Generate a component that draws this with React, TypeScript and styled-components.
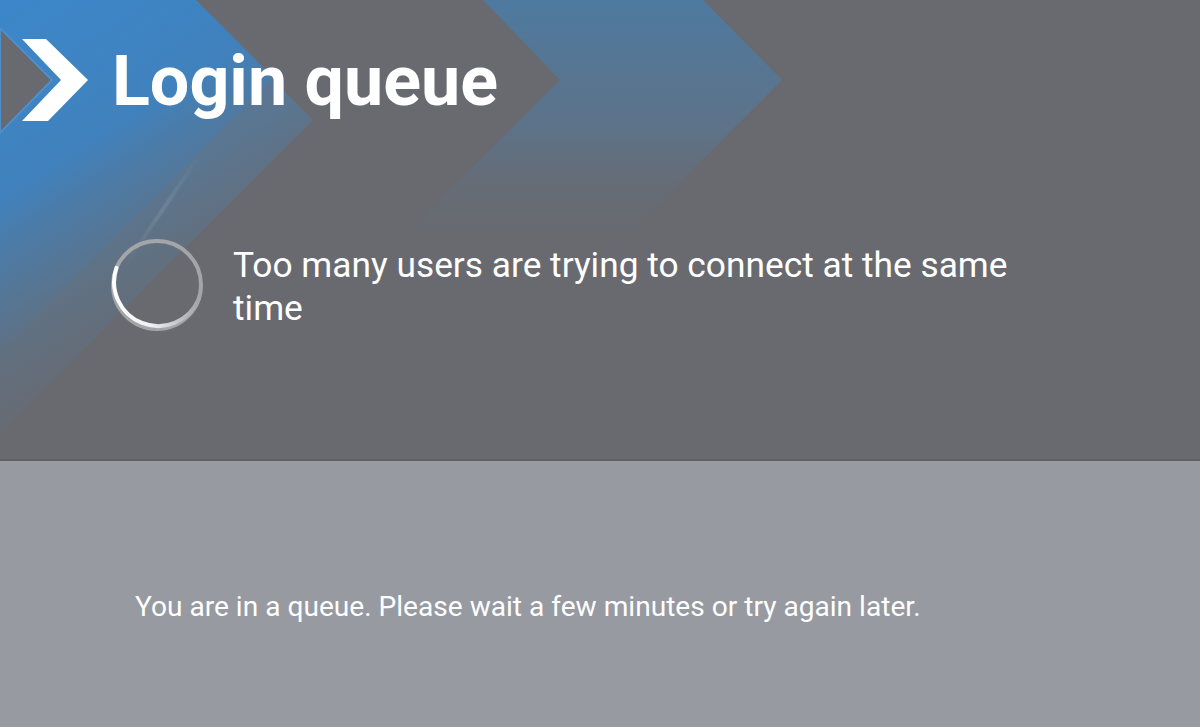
import styled, { createGlobalStyle } from "styled-components";

const GlobalStyle = createGlobalStyle`
  html, body {
    margin: 0;
    padding: 0;
    background: #686a70;
  }
  body {
    font-family: Roboto, "Noto Sans", "Liberation Sans", sans-serif;
    color: #ffffff;
  }
`;

const Screen = styled.div`
  display: flex;
  flex-direction: column;
  width: 1200px;
  height: 727px;
  overflow: hidden;
`;

const TopPanel = styled.section`
  position: relative;
  height: 459px;
  background: #686a70;
  border-bottom: 2px solid #5f6166;
  overflow: hidden;
`;

const Backdrop = styled.svg`
  position: absolute;
  inset: 0;
  width: 100%;
  height: 100%;
  pointer-events: none;
`;

const Content = styled.div`
  position: relative;
  display: flex;
  flex-direction: column;
`;

const TitleRow = styled.div`
  display: flex;
  align-items: center;
  gap: 22px;
  padding-top: 28px;
`;

const Title = styled.h1`
  margin: 0;
  font-size: 70px;
  line-height: 70px;
  font-weight: 700;
`;

const StatusRow = styled.div`
  display: flex;
  align-items: center;
  gap: 29px;
  margin-top: 104px;
  padding-left: 110px;
`;

const StatusText = styled.p`
  margin: 4px 0 0;
  max-width: 810px;
  font-size: 35.3px;
  line-height: 43px;
  font-weight: 400;
`;

const BottomPanel = styled.section`
  flex: 1;
  background: #979aa1;
  padding: 129px 0 0 135px;
`;

const Notice = styled.p`
  margin: 0;
  font-size: 28.1px;
  line-height: 34px;
  font-weight: 400;
`;

function Chevrons() {
  return (
    <Backdrop viewBox="0 0 1200 459" preserveAspectRatio="none">
      <defs>
        <linearGradient id="fadeA" x1="0" y1="0" x2="0.45" y2="1">
          <stop offset="0" stopColor="#4b7faf" stopOpacity="1" />
          <stop offset="0.55" stopColor="#587896" stopOpacity="0.85" />
          <stop offset="1" stopColor="#686a70" stopOpacity="0" />
        </linearGradient>
        <linearGradient id="fadeB" x1="0" y1="0" x2="0.5" y2="1">
          <stop offset="0" stopColor="#3c87ca" stopOpacity="1" />
          <stop offset="0.45" stopColor="#3f82bf" stopOpacity="0.95" />
          <stop offset="1" stopColor="#686a70" stopOpacity="0" />
        </linearGradient>
        <linearGradient id="fadeC" x1="0" y1="0" x2="0" y2="1">
          <stop offset="0" stopColor="#4e7aa0" stopOpacity="1" />
          <stop offset="0.5" stopColor="#5a7590" stopOpacity="0.8" />
          <stop offset="1" stopColor="#686a70" stopOpacity="0" />
        </linearGradient>
        <linearGradient id="streak" x1="0" y1="0" x2="1" y2="0">
          <stop offset="0" stopColor="#ffffff" stopOpacity="0" />
          <stop offset="0.5" stopColor="#ffffff" stopOpacity="0.1" />
          <stop offset="1" stopColor="#ffffff" stopOpacity="0" />
        </linearGradient>
      </defs>
      <polygon points="0,0 193,0 313,120 0,433" fill="url(#fadeA)" />
      <polygon points="0,0 196,0 274,78 0,352" fill="url(#fadeB)" />
      <polygon points="483,0 703,0 782,80 612,250 390,250 560,80" fill="url(#fadeC)" />
      <line x1="200" y1="155" x2="125" y2="265" stroke="url(#streak)" strokeWidth="4" />
    </Backdrop>
  );
}

function Logo() {
  return (
    <svg width="90" height="106" viewBox="0 0 90 106">
      <polygon points="0,0 52,52 0,105" fill="#686a70" stroke="#4e8fca" strokeWidth="2" />
      <polygon points="22,11 46,11 88,52 48,93 22,93 61,52" fill="#ffffff" />
    </svg>
  );
}

function Spinner() {
  return (
    <svg width="94" height="94" viewBox="0 0 94 94">
      <defs>
        <linearGradient id="spinArc" x1="0" y1="0" x2="1" y2="0">
          <stop offset="0" stopColor="#ffffff" />
          <stop offset="0.45" stopColor="#eeeff0" />
          <stop offset="1" stopColor="#a3a5a9" />
        </linearGradient>
      </defs>
      <circle cx="47" cy="47" r="44" fill="none" stroke="#a3a5a9" strokeWidth="4" />
      <path
        d="M 6.5 29.8 A 44 44 0 0 0 88.3 62"
        fill="none"
        stroke="url(#spinArc)"
        strokeWidth="4"
        strokeLinecap="round"
      />
    </svg>
  );
}

export default function App() {
  return (
    <Screen>
      <GlobalStyle />
      <TopPanel>
        <Chevrons />
        <Content>
          <TitleRow>
            <Logo />
            <Title>Login queue</Title>
          </TitleRow>
          <StatusRow>
            <Spinner />
            <StatusText>Too many users are trying to connect at the same time</StatusText>
          </StatusRow>
        </Content>
      </TopPanel>
      <BottomPanel>
        <Notice>You are in a queue. Please wait a few minutes or try again later.</Notice>
      </BottomPanel>
    </Screen>
  );
}
